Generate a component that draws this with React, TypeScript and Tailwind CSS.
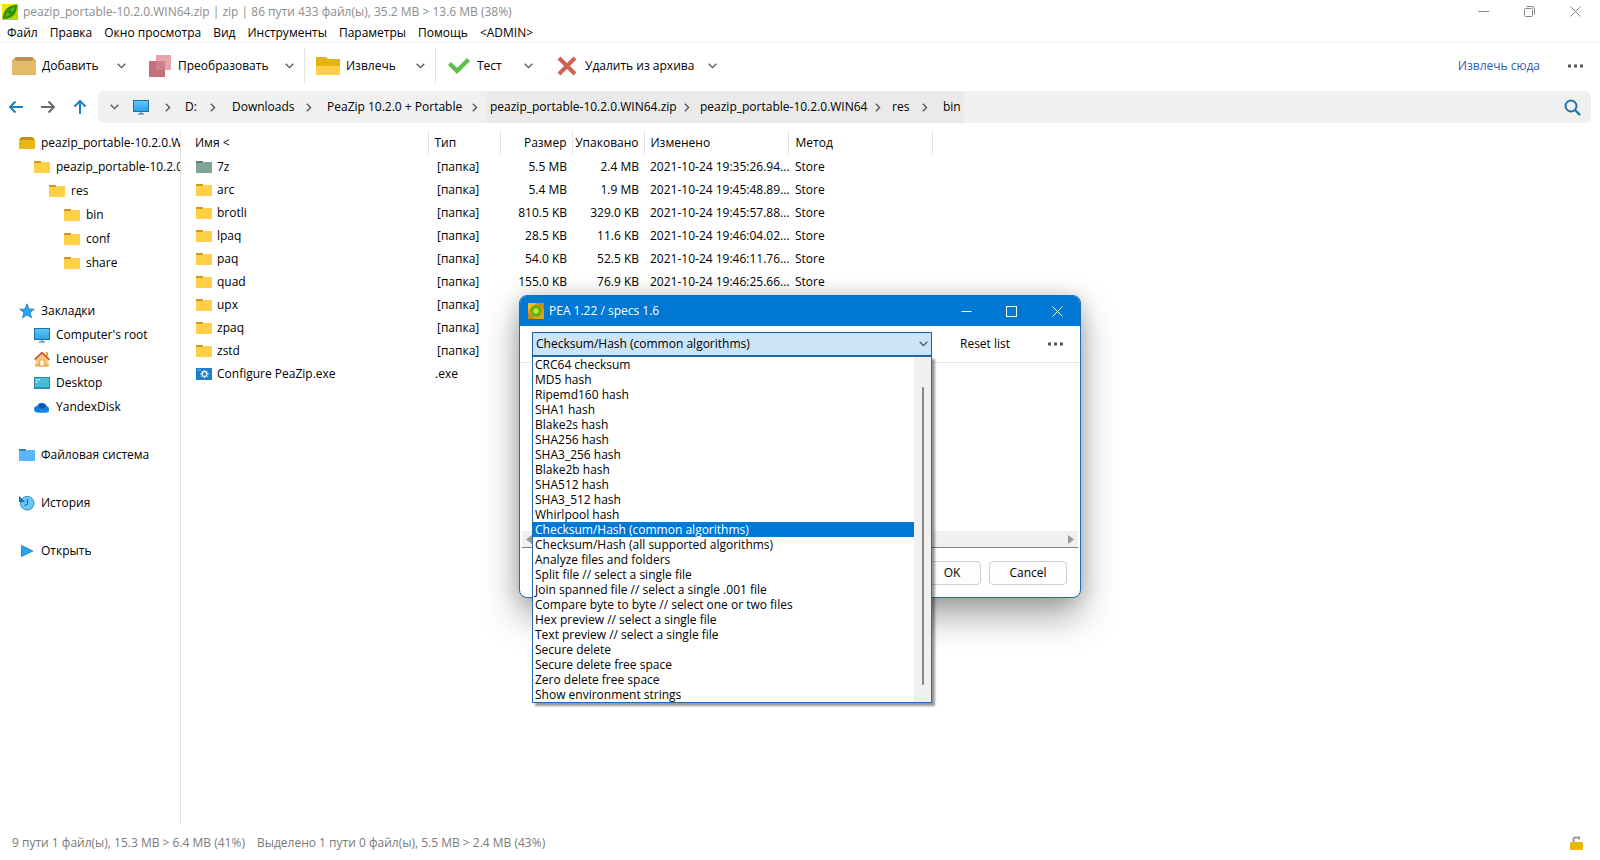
import type { ReactNode } from "react";

const menus = ["Файл", "Правка", "Окно просмотра", "Вид", "Инструменты", "Параметры", "Помощь", "<ADMIN>"];

const rows: [string, string, string, string][] = [
  ["7z", "5.5 MB", "2.4 MB", "2021-10-24 19:35:26.94..."],
  ["arc", "5.4 MB", "1.9 MB", "2021-10-24 19:45:48.89..."],
  ["brotli", "810.5 KB", "329.0 KB", "2021-10-24 19:45:57.88..."],
  ["lpaq", "28.5 KB", "11.6 KB", "2021-10-24 19:46:04.02..."],
  ["paq", "54.0 KB", "52.5 KB", "2021-10-24 19:46:11.76..."],
  ["quad", "155.0 KB", "76.9 KB", "2021-10-24 19:46:25.66..."],
  ["upx", "", "", ""],
  ["zpaq", "", "", ""],
  ["zstd", "", "", ""],
];

const options = [
  "CRC64 checksum",
  "MD5 hash",
  "Ripemd160 hash",
  "SHA1 hash",
  "Blake2s hash",
  "SHA256 hash",
  "SHA3_256 hash",
  "Blake2b hash",
  "SHA512 hash",
  "SHA3_512 hash",
  "Whirlpool hash",
  "Checksum/Hash (common algorithms)",
  "Checksum/Hash (all supported algorithms)",
  "Analyze files and folders",
  "Split file // select a single file",
  "Join spanned file // select a single .001 file",
  "Compare byte to byte // select one or two files",
  "Hex preview // select a single file",
  "Text preview // select a single file",
  "Secure delete",
  "Secure delete free space",
  "Zero delete free space",
  "Show environment strings",
];
const selected = "Checksum/Hash (common algorithms)";

function Chevron({ dir = "down", className = "text-[#555]" }: { dir?: "down" | "right"; className?: string }) {
  return dir === "down" ? (
    <svg width="9" height="6" viewBox="0 0 9 6" className={`shrink-0 ${className}`} fill="none" stroke="currentColor" strokeWidth="1.3">
      <path d="M.7.8 4.5 4.6 8.3.8" />
    </svg>
  ) : (
    <svg width="6" height="9" viewBox="0 0 6 9" className={`shrink-0 ${className}`} fill="none" stroke="currentColor" strokeWidth="1.3">
      <path d="M.8.7 4.6 4.5.8 8.3" />
    </svg>
  );
}

function Dots() {
  return (
    <svg width="16" height="4" viewBox="0 0 16 4" fill="#555">
      <rect x="0" y="0.5" width="3" height="3" />
      <rect x="6" y="0.5" width="3" height="3" />
      <rect x="12" y="0.5" width="3" height="3" />
    </svg>
  );
}

function AppLogo() {
  return (
    <svg width="16" height="16" viewBox="0 0 16 16">
      <rect width="16" height="16" fill="#b6d900" />
      <path d="M0 0h12L0 12z" fill="#f3e500" />
      <path d="M1 15C1 6 6 1 15 1c0 9-5 14-14 14z" fill="#2f8f0a" />
      <path d="M3 13C4 8 8 4 13 3c-1 5-5 9-10 10z" fill="#58b81a" />
      <circle cx="8" cy="8" r="2" fill="#2f8f0a" />
    </svg>
  );
}

function PeaLogo() {
  return (
    <svg width="16" height="16" viewBox="0 0 16 16">
      <rect width="16" height="16" fill="#e0a010" />
      <path d="M0 16V9l7 7zM16 0v7L9 0z" fill="#c98a12" />
      <path d="M0 0h8L0 8z" fill="#eebb1c" />
      <circle cx="8" cy="8" r="5.5" fill="#4fae08" />
      <circle cx="8" cy="8" r="3.6" fill="#86d21a" />
      <circle cx="8" cy="8" r="1.9" fill="#e6e04a" />
    </svg>
  );
}

function Folder({ tab = "#c99a1e", body = "#ffcf48" }: { tab?: string; body?: string }) {
  return (
    <svg width="16" height="12" viewBox="0 0 16 12" className="shrink-0">
      <path d="M0 0h7v2H0z" fill={tab} />
      <path d="M0 2h7l1-1h8v11H0z" fill={body} />
    </svg>
  );
}

function Archive() {
  return (
    <svg width="16" height="12" viewBox="0 0 16 12" className="shrink-0">
      <path d="M2.500 0h11L16 3v8.200l-.8.800H.8l-.8-.8V3z" fill="#e8b71a" />
      <path d="M2.500 0h11L16 3H0z" fill="#c48f14" />
    </svg>
  );
}

function Monitor() {
  return (
    <svg width="16" height="16" viewBox="0 0 16 16" className="shrink-0">
      <defs>
        <linearGradient id="screen" x1="0" y1="0" x2="0" y2="1">
          <stop offset="0" stopColor="#5fcaf8" />
          <stop offset="1" stopColor="#2b9fe6" />
        </linearGradient>
      </defs>
      <rect x=".5" y="1.500" width="15" height="11" fill="url(#screen)" stroke="#1d6fae" />
      <path d="M7.500 13h1v1.500h-1z M5 14.500h6v1H5z" fill="#1d6fae" />
    </svg>
  );
}

function Star() {
  return (
    <svg width="16" height="16" viewBox="0 0 16 16" className="shrink-0">
      <path d="M8 .8 10 6l5.300.200-4.200 3.400 1.500 5.200L8 11.900l-4.600 2.900 1.500-5.200L.7 6.200 6 6z" fill="#2aa5f3" stroke="#1c7fc4" strokeWidth=".8" />
    </svg>
  );
}

function House() {
  return (
    <svg width="16" height="16" viewBox="0 0 16 16" className="shrink-0">
      <path d="M12 1h2v4h-2z" fill="#e8a24a" />
      <path d="M1.500 8 8 2l6.500 6v7.500h-13z" fill="#f7cc7a" />
      <path d="M1.500 13h13v2.500h-13z" fill="#efae52" />
      <rect x="5.800" y="9" width="4.400" height="6" fill="#fff6e6" stroke="#d9923c" strokeWidth=".7" />
      <path d="M.6 8.600 8 1.600l7.400 7" fill="none" stroke="#c3503a" strokeWidth="1.700" />
    </svg>
  );
}

function Desktop() {
  return (
    <svg width="16" height="16" viewBox="0 0 16 16" className="shrink-0">
      <rect x=".5" y="2.500" width="15" height="11" fill="#45bcd4" stroke="#2b8ea8" />
      <path d="M2 4h1.500v1.500H2zM2 6.500h1.500V8H2zM4.500 4H6v1.500H4.500z" fill="#c8f3fa" />
      <path d="M1 12h14v1H1z" fill="#2b9ab4" />
    </svg>
  );
}

function Cloud() {
  return (
    <svg width="16" height="16" viewBox="0 0 16 16" className="shrink-0">
      <path d="M3.500 13.500a3.300 3.300 0 0 1-.3-6.600 5 5 0 0 1 9.200 0 3.400 3.400 0 0 1 .3 6.600z" fill="#0f7fdc" />
      <path d="M4 7.500a4.700 4.700 0 0 1 8.300-.6L8.500 10z" fill="#0a53b0" />
      <path d="M8.500 10 3 13.400h9.800a3 3 0 0 0 2.500-1.500z" fill="#1689e6" />
    </svg>
  );
}

function History() {
  return (
    <svg width="16" height="16" viewBox="0 0 16 16" className="shrink-0">
      <circle cx="8.200" cy="8.200" r="6.800" fill="#6cc7f8" stroke="#2b8ac8" />
      <path d="M0 .8V7h6z" fill="#1b6ea8" />
      <path d="M8.500 4v5.200l-3 1.300" fill="none" stroke="#1b6ea8" strokeWidth="1.200" />
    </svg>
  );
}

function Play() {
  return (
    <svg width="16" height="16" viewBox="0 0 16 16" className="shrink-0">
      <path d="M2.500 2.500 13.800 8 2.500 13.500z" fill="#2aa5f3" stroke="#1c7fc4" strokeWidth=".9" />
    </svg>
  );
}

function ExeIcon() {
  return (
    <svg width="16" height="12" viewBox="0 0 16 12" className="shrink-0">
      <rect width="16" height="12" fill="#1b7fcc" />
      <path d="M1.500 1.500h1v1h-1zM3.500 1.500h1v1h-1z" fill="#d6ecfb" />
      <circle cx="8.500" cy="6" r="2.400" fill="none" stroke="#fff" strokeWidth="1.100" />
      <path d="M8.500 1.800v1.600M8.500 8.600v1.600M4.300 6h1.600M11.100 6h1.600M5.600 3.100l1 1M10.400 7.900l1 1M5.600 8.900l1-1M10.400 4.100l1-1" stroke="#fff" strokeWidth="1" />
    </svg>
  );
}

const toolIcons = {
  add: (
    <svg width="24" height="18" viewBox="0 0 24 18">
      <path d="M3.500 0h17L24 4v14H0V4z" fill="#b98f4e" />
      <path d="M0 4h24v14H0z" fill="#e3ba69" />
      <path d="M0 4 3.500 0 5 4zM24 4 20.500 0 19 4z" fill="#cfa55c" />
    </svg>
  ),
  convert: (
    <svg width="22" height="22" viewBox="0 0 22 22">
      <rect x="7" y="0" width="15" height="15" fill="#e7a5a9" />
      <rect x="0" y="6" width="16" height="16" fill="#c4707a" />
      <rect x="7" y="6" width="9" height="9" fill="#cf8088" />
    </svg>
  ),
  extract: (
    <svg width="24" height="18" viewBox="0 0 24 18">
      <path d="M0 0h10l2 2h12v16H0z" fill="#e5b50c" />
      <path d="M0 9h24v9H0z" fill="#ffcf4a" />
    </svg>
  ),
  test: (
    <svg width="24" height="18" viewBox="0 0 24 18" fill="none">
      <path d="M2.500 6.500 10 14 21.500 2.500" stroke="#5cc04a" strokeWidth="4.400" />
    </svg>
  ),
  del: (
    <svg width="20" height="20" viewBox="0 0 20 20" fill="none">
      <path d="M2 2l16 16M18 2 2 18" stroke="#d0604f" strokeWidth="4" />
    </svg>
  ),
};

function Tool({ icon, label, width, sep }: { icon: ReactNode; label: string; width: string; sep?: boolean }) {
  return (
    <div className={`flex h-9 items-center border-l pl-[11px] pr-[10px] ${width} ${sep ? "border-[#e4e4e4]" : "border-transparent"}`}>
      <button className="flex flex-1 items-center gap-[6px] whitespace-nowrap text-left">
        <span className="flex w-6 justify-center">{icon}</span>
        {label}
      </button>
      <button aria-label={`${label}: меню`} className="py-2">
        <Chevron />
      </button>
    </div>
  );
}

function Crumb({ label, width, dark, last }: { label: string; width: string; dark?: boolean; last?: boolean }) {
  return (
    <div className={`flex h-8 items-center pl-[3px] ${width} ${dark ? "bg-[#eaeaea]" : ""}`}>
      <button className="whitespace-nowrap">{label}</button>
      {!last && (
        <span className="flex flex-1 justify-center">
          <Chevron dir="right" />
        </span>
      )}
    </div>
  );
}

function Node({ icon, label, indent = "pl-[19px]" }: { icon: ReactNode; label: string; indent?: string }) {
  return (
    <li className={`flex h-6 items-center ${indent}`}>
      <button className="flex min-w-0 items-center gap-[6px] whitespace-nowrap">
        {icon}
        <span className="min-w-0 overflow-hidden">{label}</span>
      </button>
    </li>
  );
}

function Dialog() {
  return (
    <section
      role="dialog"
      aria-labelledby="pea-title"
      className="absolute left-1/2 top-[295px] flex w-[562px] -translate-x-1/2 flex-col rounded-lg border border-[#1f6cb0] bg-white shadow-[0_18px_36px_rgba(0,0,0,0.36),0_0_18px_rgba(0,0,0,0.16)]"
    >
      <header className="flex h-[30px] items-center rounded-t-[7px] bg-[#0078d4] pl-2 text-white">
        <PeaLogo />
        <h2 id="pea-title" className="ml-[5px] flex-1">PEA 1.22 / specs 1.6</h2>
        <button aria-label="Minimize" className="flex h-full w-[45px] items-center justify-center">
          <svg width="11" height="11" viewBox="0 0 11 11" stroke="#fff"><path d="M.5 5.500h10" /></svg>
        </button>
        <button aria-label="Maximize" className="flex h-full w-[45px] items-center justify-center">
          <svg width="11" height="11" viewBox="0 0 11 11" stroke="#fff" fill="none"><rect x=".5" y=".5" width="10" height="10" /></svg>
        </button>
        <button aria-label="Close" className="flex h-full w-[46px] items-center justify-center">
          <svg width="11" height="11" viewBox="0 0 11 11" stroke="#fff"><path d="M.5.5l10 10M10.500.5l-10 10" /></svg>
        </button>
      </header>
      <div className="flex h-[37px] items-center border-b border-[#e8e8e8] pl-3">
        <div className="relative w-[400px]">
          <label htmlFor="mode" className="sr-only">Mode</label>
          <select id="mode" defaultValue={selected} className="block h-6 w-full appearance-none border border-[#1a5f9e] bg-[#cce4f7] pl-[3px] pr-6">
            {options.map((o) => (
              <option key={o}>{o}</option>
            ))}
          </select>
          <span className="pointer-events-none absolute right-1 top-[9px]">
            <Chevron />
          </span>
          <div className="absolute left-0 top-full flex w-full border border-[#1f6cb0] bg-white shadow-[3px_3px_2px_rgba(0,0,0,0.4)]">
            <ul role="listbox" aria-label="Mode" className="flex-1">
              {options.map((o) => (
                <li
                  key={o}
                  role="option"
                  aria-selected={o === selected}
                  className={`h-[15px] whitespace-nowrap pl-[2px] leading-[15px] ${o === selected ? "bg-[#0078d7] text-white" : ""}`}
                >
                  {o}
                </li>
              ))}
            </ul>
            <div className="flex w-[17px] justify-center bg-[#f0f0f0] pb-[17px] pt-[30px]">
              <div className="w-[2px] rounded-full bg-[#868686]" />
            </div>
          </div>
        </div>
        <button className="ml-7">Reset list</button>
        <button aria-label="More" className="ml-auto mr-4 py-2">
          <Dots />
        </button>
      </div>
      <div className="mx-[2px] flex h-[185px] flex-col justify-end border-b border-[#828282]">
        <div className="flex h-4 items-center justify-between bg-[#f0f0f0] px-1">
          <svg width="6" height="9" viewBox="0 0 6 9" fill="#9a9a9a"><path d="M6 0v9L0 4.500z" /></svg>
          <svg width="6" height="9" viewBox="0 0 6 9" fill="#9a9a9a"><path d="M0 0v9l6-4.500z" /></svg>
        </div>
      </div>
      <footer className="flex justify-end gap-2 px-[13px] pb-3 pt-[13px]">
        <button className="h-6 w-[58px] rounded-[4px] border border-[#cfcfcf] bg-[#fdfdfd]">OK</button>
        <button className="h-6 w-[78px] rounded-[4px] border border-[#cfcfcf] bg-[#fdfdfd]">Cancel</button>
      </footer>
    </section>
  );
}

export default function App() {
  return (
    <div className="relative flex min-h-screen flex-col overflow-hidden bg-white font-['Open_Sans','Noto_Sans',sans-serif] text-[12px] leading-4 text-black">
      <header className="flex h-[23px] items-center pl-[2px] text-[#8c8c8c]">
        <AppLogo />
        <h1 className="ml-[5px] flex-1">peazip_portable-10.2.0.WIN64.zip | zip | 86 пути 433 файл(ы), 35.2 MB &gt; 13.6 MB (38%)</h1>
        <button aria-label="Свернуть" className="flex h-full w-[45px] items-center justify-center">
          <svg width="11" height="11" viewBox="0 0 11 11" stroke="#8a8a8a"><path d="M0 5.500h11" /></svg>
        </button>
        <button aria-label="Восстановить" className="flex h-full w-[46px] items-center justify-center">
          <svg width="11" height="11" viewBox="0 0 11 11" stroke="#8a8a8a" fill="none">
            <rect x=".5" y="2.500" width="8" height="8" rx="1" />
            <path d="M2.500.5H8a2.500 2.500 0 0 1 2.500 2.500v5.500" />
          </svg>
        </button>
        <button aria-label="Закрыть" className="mr-[2px] flex h-full w-[46px] items-center justify-center">
          <svg width="11" height="11" viewBox="0 0 11 11" stroke="#8a8a8a"><path d="M.5.5l10 10M10.500.5l-10 10" /></svg>
        </button>
      </header>

      <nav className="flex h-5 items-center gap-3 border-b border-[#f0f0f0] pl-[7px]">
        {menus.map((m) => (
          <button key={m} className="whitespace-nowrap">{m}</button>
        ))}
      </nav>

      <div className="flex h-[45px] items-center">
        <Tool icon={toolIcons.add} label="Добавить" width="w-[136px]" />
        <Tool icon={toolIcons.convert} label="Преобразовать" width="w-[168px]" />
        <Tool icon={toolIcons.extract} label="Извлечь" width="w-[131px]" sep />
        <Tool icon={toolIcons.test} label="Тест" width="w-[108px]" sep />
        <Tool icon={toolIcons.del} label="Удалить из архива" width="w-[184px]" />
        <a href="#extract" className="ml-auto mr-7 text-[#2a5db8]">Извлечь сюда</a>
        <button aria-label="Ещё" className="mr-4 py-2">
          <Dots />
        </button>
      </div>

      <div className="flex items-center py-[3px] pr-[9px]">
        <div className="flex w-[98px] items-center gap-4 pl-2">
          <button aria-label="Назад">
            <svg width="16" height="16" viewBox="0 0 16 16" fill="none" stroke="#1d7fc4" strokeWidth="2"><path d="M15 8H2M7.500 2.500 2 8l5.500 5.500" /></svg>
          </button>
          <button aria-label="Вперёд">
            <svg width="16" height="16" viewBox="0 0 16 16" fill="none" stroke="#6a6a6a" strokeWidth="2"><path d="M1 8h13M8.500 2.500 14 8l-5.500 5.500" /></svg>
          </button>
          <button aria-label="Вверх">
            <svg width="16" height="16" viewBox="0 0 16 16" fill="none" stroke="#1d7fc4" strokeWidth="2"><path d="M8 15V2M2.500 7.500 8 2l5.500 5.500" /></svg>
          </button>
        </div>
        <div className="flex h-8 flex-1 items-center rounded-md bg-[#f0f0f0] pl-3 pr-[10px]">
          <Chevron />
          <span className="ml-[14px] mr-4">
            <Monitor />
          </span>
          <Chevron dir="right" />
          <span className="w-[11px]" />
          <Crumb label="D:" width="w-[47px]" />
          <Crumb label="Downloads" width="w-[95px]" />
          <Crumb label="PeaZip 10.2.0 + Portable" width="w-[163px]" />
          <Crumb label="peazip_portable-10.2.0.WIN64.zip" width="w-[210px]" dark />
          <Crumb label="peazip_portable-10.2.0.WIN64" width="w-[192px]" dark />
          <Crumb label="res" width="w-[51px]" dark />
          <Crumb label="bin" width="w-[24px]" dark last />
          <button aria-label="Поиск" className="ml-auto">
            <svg width="17" height="17" viewBox="0 0 17 17" fill="none" stroke="#1f77aa" strokeWidth="2">
              <circle cx="7" cy="7" r="5.500" />
              <path d="M11 11l5 5" strokeWidth="2.400" />
            </svg>
          </button>
        </div>
      </div>

      <main className="mt-[5px] flex flex-1">
        <aside className="w-[181px] overflow-hidden border-r border-[#e4e4e4]">
          <ul>
            <Node icon={<Archive />} label="peazip_portable-10.2.0.WIN64.zip" />
            <Node icon={<Folder />} label="peazip_portable-10.2.0.WIN64" indent="pl-[34px]" />
            <Node icon={<Folder />} label="res" indent="pl-[49px]" />
            <Node icon={<Folder />} label="bin" indent="pl-16" />
            <Node icon={<Folder />} label="conf" indent="pl-16" />
            <Node icon={<Folder />} label="share" indent="pl-16" />
          </ul>
          <ul className="mt-6">
            <Node icon={<Star />} label="Закладки" />
            <Node icon={<Monitor />} label="Computer's root" indent="pl-[34px]" />
            <Node icon={<House />} label="Lenouser" indent="pl-[34px]" />
            <Node icon={<Desktop />} label="Desktop" indent="pl-[34px]" />
            <Node icon={<Cloud />} label="YandexDisk" indent="pl-[34px]" />
          </ul>
          <ul className="mt-6 flex flex-col gap-6">
            <Node icon={<Folder tab="#2d7fb4" body="#58b8fb" />} label="Файловая система" />
            <Node icon={<History />} label="История" />
            <Node icon={<Play />} label="Открыть" />
          </ul>
        </aside>

        <div className="flex-1">
          <table className="w-[751px] table-fixed border-collapse">
            <colgroup>
              <col className="w-[247px]" />
              <col className="w-[72px]" />
              <col className="w-[72px]" />
              <col className="w-[72px]" />
              <col className="w-[144px]" />
              <col className="w-[144px]" />
            </colgroup>
            <thead>
              <tr className="h-6 text-left [&>th]:border-r [&>th]:border-[#e4e4e4] [&>th]:font-normal">
                <th className="pl-[14px]">Имя &lt;</th>
                <th className="pl-[6px]">Тип</th>
                <th className="pr-[5px] text-right">Размер</th>
                <th className="pr-[5px] text-right">Упаковано</th>
                <th className="pl-[6px]">Изменено</th>
                <th className="pl-[7px]">Метод</th>
              </tr>
            </thead>
            <tbody>
              {rows.map(([name, size, packed, date]) => (
                <tr key={name} className="h-[23px] whitespace-nowrap">
                  <td className="pl-[15px]">
                    <div className="flex items-center gap-[5px]">
                      {name === "7z" ? <Folder tab="#5b8272" body="#7ea595" /> : <Folder />}
                      {name}
                    </div>
                  </td>
                  <td className="pl-[9px]">[папка]</td>
                  <td className="pr-[5px] text-right">{size}</td>
                  <td className="pr-[5px] text-right">{packed}</td>
                  <td className="pl-[6px]">{date}</td>
                  <td className="pl-[7px]">{date && "Store"}</td>
                </tr>
              ))}
              <tr className="h-[23px]">
                <td className="pl-[15px]">
                  <div className="flex items-center gap-[5px]">
                    <ExeIcon />
                    Configure PeaZip.exe
                  </div>
                </td>
                <td className="pl-[7px]">.exe</td>
                <td />
                <td />
                <td />
                <td />
              </tr>
            </tbody>
          </table>
        </div>
      </main>

      <footer className="flex h-9 items-center gap-3 pl-3 pr-[17px] pt-[2px] text-[#7a7a7a]">
        <span>9 пути 1 файл(ы), 15.3 MB &gt; 6.4 MB (41%)</span>
        <span>Выделено 1 пути 0 файл(ы), 5.5 MB &gt; 2.4 MB (43%)</span>
        <svg width="13" height="14" viewBox="0 0 13 14" className="ml-auto">
          <path d="M3.500 7V3.200A1.700 1.700 0 0 1 5.200 1.500H9v2" fill="none" stroke="#9a9a9a" strokeWidth="2" />
          <rect x="0" y="6" width="13" height="8" rx="1.500" fill="#e6b800" />
        </svg>
      </footer>

      <Dialog />
    </div>
  );
}
